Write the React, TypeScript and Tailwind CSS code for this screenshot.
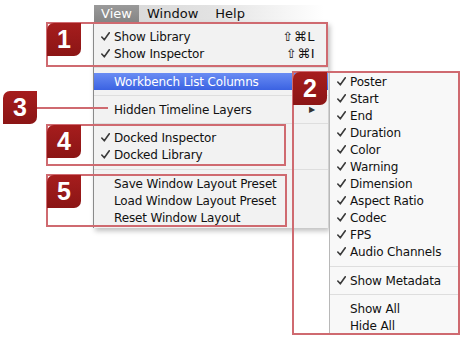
import React from 'react';

const Badge: React.FC<{ n: string; className: string }> = ({ n, className }) => (
  <div
    className={`absolute flex h-[33px] w-[34px] items-center justify-center rounded-tl-[7px] rounded-br-[7px] bg-gradient-to-b from-[#a61d1d] to-[#8b1515] font-['Liberation_Sans',sans-serif] text-[25px] font-bold leading-none text-white ${className}`}>
    {n}
  </div>
);

const Check: React.FC<{ w?: string }> = ({ w = 'w-[13px]' }) => (
  <span className={`flex ${w} items-center`}>
    <svg width="9" height="9" viewBox="0 0 9 9">
      <path d="M0.8 5 L3.3 7.8 L8.3 0.8" fill="none" stroke="#3a3a3a" strokeWidth="1.6" strokeLinecap="round" strokeLinejoin="round" />
    </svg>
  </span>
);

const Row: React.FC<{ label: string; check?: boolean; shortcut?: string; arrow?: boolean }> = ({
  label,
  check,
  shortcut,
  arrow,
}) => (
  <div className="flex h-[17px] items-center pl-[7px] pr-[13px]">
    {check ? <Check /> : <span className="w-[13px]" />}
    <span className="flex-1 whitespace-nowrap">{label}</span>
    {shortcut && <span className="text-[13px] tracking-[0.5px]">{shortcut}</span>}
    {arrow && <span className="text-[8px] text-[#333]">▶</span>}
  </div>
);

const Sep: React.FC<{ h: string }> = ({ h }) => (
  <div className={`flex items-center ${h}`}>
    <div className="h-px w-full bg-[#dedede]" />
  </div>
);

const subItems = [
  'Poster',
  'Start',
  'End',
  'Duration',
  'Color',
  'Warning',
  'Dimension',
  'Aspect Ratio',
  'Codec',
  'FPS',
  'Audio Channels',
];

export default function App() {
  return (
    <div className="relative h-[340px] w-[465px] overflow-hidden bg-white font-['DejaVu_Sans',sans-serif] text-[12px] tracking-[-0.15px] text-[#111]">
      {/* menu bar */}
      <div className="ml-[94px] mt-[5px] flex h-[17px] w-[230px] items-center bg-gradient-to-r from-[#d6d6d6] via-[#e2e2e2] to-white text-[13px] tracking-normal">
        <div className="flex h-full w-[45px] items-center justify-center bg-gradient-to-b from-[#9a9a9a] to-[#858585] text-white">
          View
        </div>
        <span className="ml-[8px]">Window</span>
        <span className="ml-[17px]">Help</span>
      </div>

      {/* main menu */}
      <div className="ml-[93px] w-[235px] border-l border-[#8a8a8a] bg-[#f2f2f2] pb-[2px] pt-[6px] shadow-[2px_3px_5px_rgba(0,0,0,0.25)]">
        <Row label="Show Library" check shortcut="⇧⌘L" />
        <Row label="Show Inspector" check shortcut="⇧⌘I" />
        <Sep h="h-[11px]" />
        <div className="flex h-[17px] items-center bg-gradient-to-b from-[#6a8cf3] to-[#3b62e2] pl-[20px] text-white">
          Workbench List Columns
        </div>
        <Sep h="h-[11px]" />
        <Row label="Hidden Timeline Layers" arrow />
        <Sep h="h-[11px]" />
        <Row label="Docked Inspector" check />
        <Row label="Docked Library" check />
        <Sep h="h-[12px]" />
        <Row label="Save Window Layout Preset" />
        <Row label="Load Window Layout Preset" />
        <Row label="Reset Window Layout" />
      </div>

      {/* submenu */}
      <div className="absolute left-[329px] top-[72px] w-[129px] border-l border-[#b8b8b8] bg-[#f8f8f8] pt-px">
        {subItems.map((s) => (
          <div key={s} className="flex h-[17px] items-center pl-[7px]">
            <Check />
            <span>{s}</span>
          </div>
        ))}
        <Sep h="h-[12px]" />
        <div className="flex h-[17px] items-center pl-[7px]">
          <Check />
          <span>Show Metadata</span>
        </div>
        <Sep h="h-[11px]" />
        <div className="flex h-[17px] items-center pl-[20px]">Show All</div>
        <div className="flex h-[17px] items-center pl-[20px]">Hide All</div>
      </div>

      {/* callout outlines */}
      <div className="absolute left-[46px] top-[22px] h-[45px] w-[282px] border-2 border-[#cf6a70]" />
      <div className="absolute left-[292px] top-[71px] h-[264px] w-[168px] border-2 border-[#cf6a70]" />
      <div className="absolute left-[46px] top-[124px] h-[42px] w-[240px] border-2 border-[#cf6a70]" />
      <div className="absolute left-[46px] top-[174px] h-[53px] w-[241px] border-2 border-[#cf6a70]" />
      <div className="absolute left-[37px] top-[107px] h-[2px] w-[71px] bg-[#cf6a70]" />

      <Badge n="1" className="left-[47px] top-[23px]" />
      <Badge n="2" className="left-[293px] top-[72px]" />
      <Badge n="3" className="left-[3px] top-[91px]" />
      <Badge n="4" className="left-[47px] top-[125px]" />
      <Badge n="5" className="left-[47px] top-[175px]" />
    </div>
  );
}
